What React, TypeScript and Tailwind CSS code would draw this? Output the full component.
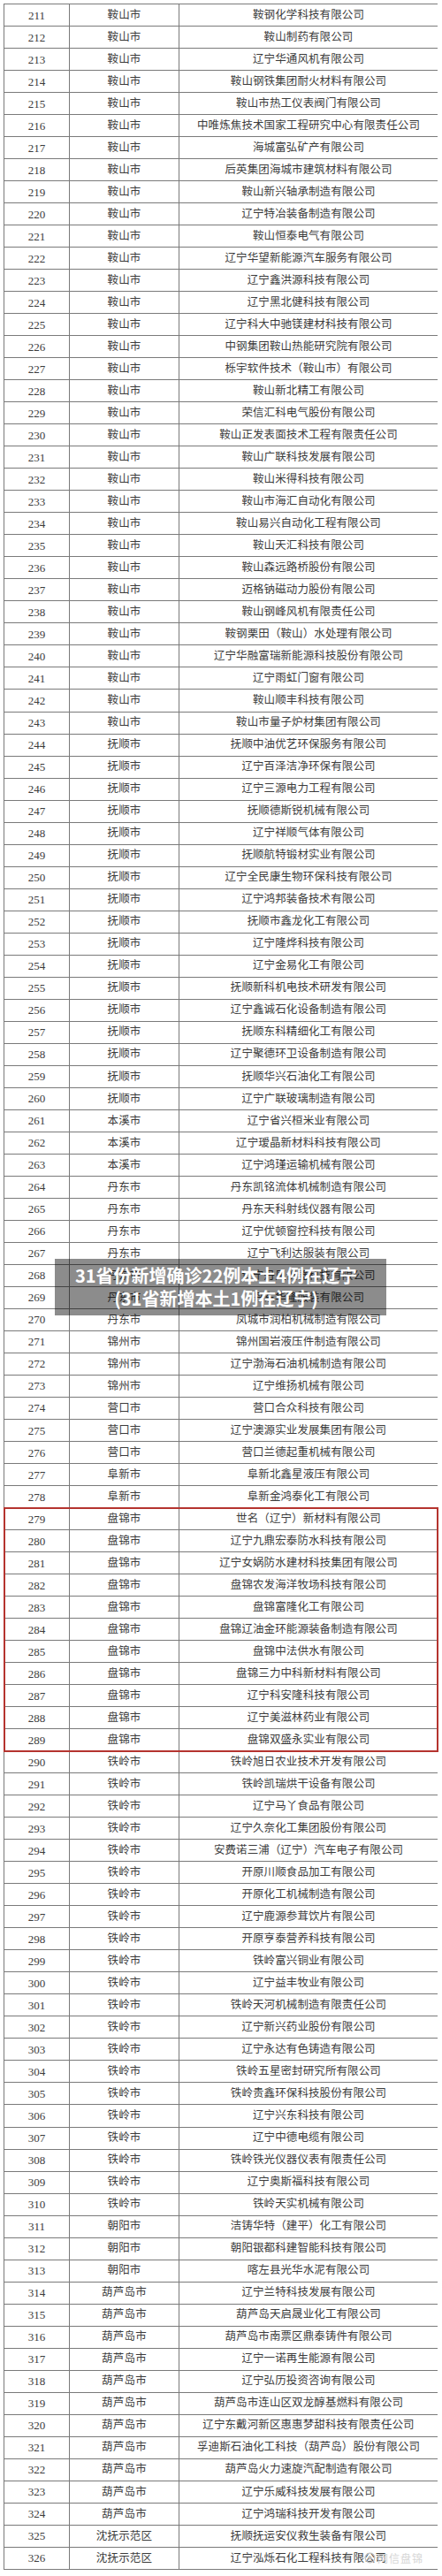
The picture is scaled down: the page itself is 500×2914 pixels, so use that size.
import React from 'react';

type Row = [number, string, string];

const rows: Row[] = [
  [211, '鞍山市', '鞍钢化学科技有限公司'],
  [212, '鞍山市', '鞍山制药有限公司'],
  [213, '鞍山市', '辽宁华通风机有限公司'],
  [214, '鞍山市', '鞍山钢铁集团耐火材料有限公司'],
  [215, '鞍山市', '鞍山市热工仪表阀门有限公司'],
  [216, '鞍山市', '中唯炼焦技术国家工程研究中心有限责任公司'],
  [217, '鞍山市', '海城富弘矿产有限公司'],
  [218, '鞍山市', '后英集团海城市建筑材料有限公司'],
  [219, '鞍山市', '鞍山新兴轴承制造有限公司'],
  [220, '鞍山市', '辽宁特冶装备制造有限公司'],
  [221, '鞍山市', '鞍山恒泰电气有限公司'],
  [222, '鞍山市', '辽宁华望新能源汽车服务有限公司'],
  [223, '鞍山市', '辽宁鑫洪源科技有限公司'],
  [224, '鞍山市', '辽宁黑北健科技有限公司'],
  [225, '鞍山市', '辽宁科大中驰镁建材科技有限公司'],
  [226, '鞍山市', '中钢集团鞍山热能研究院有限公司'],
  [227, '鞍山市', '栎宇软件技术（鞍山市）有限公司'],
  [228, '鞍山市', '鞍山新北精工有限公司'],
  [229, '鞍山市', '荣信汇科电气股份有限公司'],
  [230, '鞍山市', '鞍山正发表面技术工程有限责任公司'],
  [231, '鞍山市', '鞍山广联科技发展有限公司'],
  [232, '鞍山市', '鞍山米得科技有限公司'],
  [233, '鞍山市', '鞍山市海汇自动化有限公司'],
  [234, '鞍山市', '鞍山易兴自动化工程有限公司'],
  [235, '鞍山市', '鞍山天汇科技有限公司'],
  [236, '鞍山市', '鞍山森远路桥股份有限公司'],
  [237, '鞍山市', '迈格钠磁动力股份有限公司'],
  [238, '鞍山市', '鞍山钢峰风机有限责任公司'],
  [239, '鞍山市', '鞍钢栗田（鞍山）水处理有限公司'],
  [240, '鞍山市', '辽宁华融富瑞新能源科技股份有限公司'],
  [241, '鞍山市', '辽宁雨虹门窗有限公司'],
  [242, '鞍山市', '鞍山顺丰科技有限公司'],
  [243, '鞍山市', '鞍山市量子炉材集团有限公司'],
  [244, '抚顺市', '抚顺中油优艺环保服务有限公司'],
  [245, '抚顺市', '辽宁百泽洁净环保有限公司'],
  [246, '抚顺市', '辽宁三源电力工程有限公司'],
  [247, '抚顺市', '抚顺德斯锐机械有限公司'],
  [248, '抚顺市', '辽宁祥顺气体有限公司'],
  [249, '抚顺市', '抚顺航特锻材实业有限公司'],
  [250, '抚顺市', '辽宁全民康生物环保科技有限公司'],
  [251, '抚顺市', '辽宁鸿邦装备技术有限公司'],
  [252, '抚顺市', '抚顺市鑫龙化工有限公司'],
  [253, '抚顺市', '辽宁隆烨科技有限公司'],
  [254, '抚顺市', '辽宁金易化工有限公司'],
  [255, '抚顺市', '抚顺新科机电技术研发有限公司'],
  [256, '抚顺市', '辽宁鑫诚石化设备制造有限公司'],
  [257, '抚顺市', '抚顺东科精细化工有限公司'],
  [258, '抚顺市', '辽宁聚德环卫设备制造有限公司'],
  [259, '抚顺市', '抚顺华兴石油化工有限公司'],
  [260, '抚顺市', '辽宁广联玻璃制造有限公司'],
  [261, '本溪市', '辽宁省兴桓米业有限公司'],
  [262, '本溪市', '辽宁瑷晶新材料科技有限公司'],
  [263, '本溪市', '辽宁鸿瑾运输机械有限公司'],
  [264, '丹东市', '丹东凯铭流体机械制造有限公司'],
  [265, '丹东市', '丹东天科射线仪器有限公司'],
  [266, '丹东市', '辽宁优顿窗控科技有限公司'],
  [267, '丹东市', '辽宁飞利达服装有限公司'],
  [268, '丹东市', '辽宁丹凤仪器科技有限公司'],
  [269, '丹东市', '丹东华隆服装有限公司'],
  [270, '丹东市', '凤城市润柏机械制造有限公司'],
  [271, '锦州市', '锦州国岩液压件制造有限公司'],
  [272, '锦州市', '辽宁渤海石油机械制造有限公司'],
  [273, '锦州市', '辽宁维扬机械有限公司'],
  [274, '营口市', '营口合众科技有限公司'],
  [275, '营口市', '辽宁澳源实业发展集团有限公司'],
  [276, '营口市', '营口兰德起重机械有限公司'],
  [277, '阜新市', '阜新北鑫星液压有限公司'],
  [278, '阜新市', '阜新金鸿泰化工有限公司'],
  [279, '盘锦市', '世名（辽宁）新材料有限公司'],
  [280, '盘锦市', '辽宁九鼎宏泰防水科技有限公司'],
  [281, '盘锦市', '辽宁女娲防水建材科技集团有限公司'],
  [282, '盘锦市', '盘锦农发海洋牧场科技有限公司'],
  [283, '盘锦市', '盘锦富隆化工有限公司'],
  [284, '盘锦市', '盘锦辽油金环能源装备制造有限公司'],
  [285, '盘锦市', '盘锦中法供水有限公司'],
  [286, '盘锦市', '盘锦三力中科新材料有限公司'],
  [287, '盘锦市', '辽宁科安隆科技有限公司'],
  [288, '盘锦市', '辽宁美滋林药业有限公司'],
  [289, '盘锦市', '盘锦双盛永实业有限公司'],
  [290, '铁岭市', '铁岭旭日农业技术开发有限公司'],
  [291, '铁岭市', '铁岭凯瑞烘干设备有限公司'],
  [292, '铁岭市', '辽宁马丫食品有限公司'],
  [293, '铁岭市', '辽宁久奈化工集团股份有限公司'],
  [294, '铁岭市', '安费诺三浦（辽宁）汽车电子有限公司'],
  [295, '铁岭市', '开原川顺食品加工有限公司'],
  [296, '铁岭市', '开原化工机械制造有限公司'],
  [297, '铁岭市', '辽宁鹿源参茸饮片有限公司'],
  [298, '铁岭市', '开原亨泰营养科技有限公司'],
  [299, '铁岭市', '铁岭富兴铜业有限公司'],
  [300, '铁岭市', '辽宁益丰牧业有限公司'],
  [301, '铁岭市', '铁岭天河机械制造有限责任公司'],
  [302, '铁岭市', '辽宁新兴药业股份有限公司'],
  [303, '铁岭市', '辽宁永达有色铸造有限公司'],
  [304, '铁岭市', '铁岭五星密封研究所有限公司'],
  [305, '铁岭市', '铁岭贵鑫环保科技股份有限公司'],
  [306, '铁岭市', '辽宁兴东科技有限公司'],
  [307, '铁岭市', '辽宁中德电缆有限公司'],
  [308, '铁岭市', '铁岭铁光仪器仪表有限责任公司'],
  [309, '铁岭市', '辽宁奥斯福科技有限公司'],
  [310, '铁岭市', '铁岭天实机械有限公司'],
  [311, '朝阳市', '洁铸华特（建平）化工有限公司'],
  [312, '朝阳市', '朝阳银都科建智能科技有限公司'],
  [313, '朝阳市', '喀左县光华水泥有限公司'],
  [314, '葫芦岛市', '辽宁兰特科技发展有限公司'],
  [315, '葫芦岛市', '葫芦岛天启晟业化工有限公司'],
  [316, '葫芦岛市', '葫芦岛市南票区鼎泰铸件有限公司'],
  [317, '葫芦岛市', '辽宁一诺再生能源有限公司'],
  [318, '葫芦岛市', '辽宁弘历投资咨询有限公司'],
  [319, '葫芦岛市', '葫芦岛市连山区双龙醇基燃料有限公司'],
  [320, '葫芦岛市', '辽宁东戴河新区惠惠梦甜科技有限责任公司'],
  [321, '葫芦岛市', '孚迪斯石油化工科技（葫芦岛）股份有限公司'],
  [322, '葫芦岛市', '葫芦岛火力速旋汽配制造有限公司'],
  [323, '葫芦岛市', '辽宁乐威科技发展有限公司'],
  [324, '葫芦岛市', '辽宁鸿瑞科技开发有限公司'],
  [325, '沈抚示范区', '抚顺抚运安仪救生装备有限公司'],
  [326, '沈抚示范区', '辽宁泓烁石化工程科技有限公司'],
];

const TableRow = ({ row }: { row: Row }) => {
  const [no, city, company] = row;
  return (
    <div className="flex h-[25.03px] border-b border-[#7a7a7a]">
      <div className="flex w-[74px] items-center justify-center border-r border-[#7a7a7a] font-['Liberation_Serif',serif] text-[13px]">
        {no}
      </div>
      <div className="flex w-[124px] items-center justify-center border-r border-[#7a7a7a] tracking-[0.2px]">
        {city}
      </div>
      <div className="flex flex-1 items-center justify-center whitespace-nowrap tracking-[0.1px]">
        {company}
      </div>
    </div>
  );
};

export default function App() {
  const before = rows.filter((r) => r[0] < 279);
  const marked = rows.filter((r) => r[0] >= 279 && r[0] <= 289);
  const after = rows.filter((r) => r[0] > 289);

  return (
    <div className="relative h-[2914px] w-[500px] overflow-hidden bg-white pl-[4px] pt-[4px] font-['Liberation_Serif','Noto_Sans_CJK_SC',serif] text-[12.5px] leading-none text-[#3c3c3c]">
      <div className="w-[491px] border-l border-t border-[#7a7a7a]">
        {before.map((r) => (
          <TableRow key={r[0]} row={r} />
        ))}

        {/* highlighted block */}
        <div className="relative z-10 outline-2 -outline-offset-1 outline-[#b5342f]">
          {marked.map((r) => (
            <TableRow key={r[0]} row={r} />
          ))}
        </div>

        {after.map((r) => (
          <TableRow key={r[0]} row={r} />
        ))}
      </div>

      {/* headline caption over the table */}
      <div className="absolute left-[62px] top-[1424px] z-20 flex h-[64px] w-[375px] flex-col items-center justify-center bg-black/45 pr-[10px] font-['Noto_Sans_CJK_SC',sans-serif] text-[20px] font-bold leading-[26px] text-white">
        <span>31省份新增确诊22例本土4例在辽宁</span>
        <span>(31省新增本土1例在辽宁)</span>
      </div>

      {/* watermark */}
      <div className="absolute left-[412px] top-[2887px] z-20 flex items-center gap-[2px] font-['Noto_Sans_CJK_SC',sans-serif] text-[12px] leading-none text-[#d6d6d6]">
        <svg width="13" height="13" viewBox="0 0 16 16" fill="none">
          <circle cx="8" cy="8" r="6.5" stroke="#bdbdbd" strokeWidth="1.6" />
          <circle cx="8" cy="8" r="2.5" fill="#bdbdbd" />
        </svg>
        <span className="tracking-[1px]">网信盘锦</span>
      </div>
    </div>
  );
}
